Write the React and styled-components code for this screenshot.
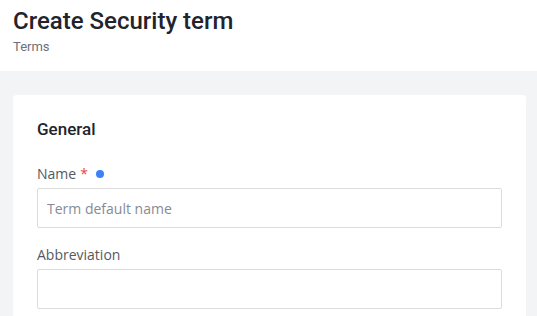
import React from "react";
import styled, { createGlobalStyle } from "styled-components";

const Global = createGlobalStyle`
  html, body { margin: 0; padding: 0; background: #f3f4f6; }
  body { font-family: Roboto, "Open Sans", sans-serif; }
  * { box-sizing: border-box; }
`;

const Page = styled.div`
  min-height: 316px;
  display: flex;
  flex-direction: column;
`;

const Header = styled.header`
  background: #ffffff;
  height: 71px;
  padding: 6px 13px 0;
`;

const Title = styled.h1`
  margin: 0;
  font-family: Roboto, sans-serif;
  font-weight: 500;
  font-size: 24px;
  line-height: 30px;
  color: #23232b;
`;

const Crumb = styled.div`
  margin-top: 3px;
  font-family: Roboto, sans-serif;
  font-size: 13px;
  line-height: 16px;
  color: #6e6e7a;
`;

const Body = styled.main`
  padding: 24px 11px 0 13px;
`;

const Card = styled.section`
  background: #ffffff;
  border-radius: 4px;
  padding: 23px 24px 24px;
`;

const SectionTitle = styled.h2`
  margin: 0 0 24px;
  font-family: Roboto, sans-serif;
  font-weight: 500;
  font-size: 17px;
  line-height: 22px;
  color: #23232b;
`;

const Field = styled.div`
  display: flex;
  flex-direction: column;
  margin-bottom: 17px;
`;

const Label = styled.label`
  display: flex;
  align-items: center;
  gap: 4px;
  font-family: "Open Sans", sans-serif;
  font-size: 14px;
  line-height: 20px;
  color: #555a62;
  margin-bottom: 4px;
`;

const Req = styled.span`
  color: #e5484d;
`;

const Dot = styled.span`
  width: 8px;
  height: 8px;
  border-radius: 50%;
  background: #3b82f6;
  margin-left: 4px;
`;

const Input = styled.input`
  height: 40px;
  width: 100%;
  border: 1px solid #dcdcdc;
  border-radius: 2px;
  padding: 0 9px;
  font-family: "Open Sans", sans-serif;
  font-size: 14px;
  color: #333;
  background: #fff;
  outline: none;
  &::placeholder { color: #868b93; }
`;

export default function App() {
  return (
    <Page>
      <Global />
      <Header>
        <Title>Create Security term</Title>
        <Crumb>Terms</Crumb>
      </Header>
      <Body>
        <Card>
          <SectionTitle>General</SectionTitle>
          <Field>
            <Label>
              Name <Req>*</Req>
              <Dot />
            </Label>
            <Input placeholder="Term default name" />
          </Field>
          <Field>
            <Label>Abbreviation</Label>
            <Input />
          </Field>
        </Card>
      </Body>
    </Page>
  );
}
